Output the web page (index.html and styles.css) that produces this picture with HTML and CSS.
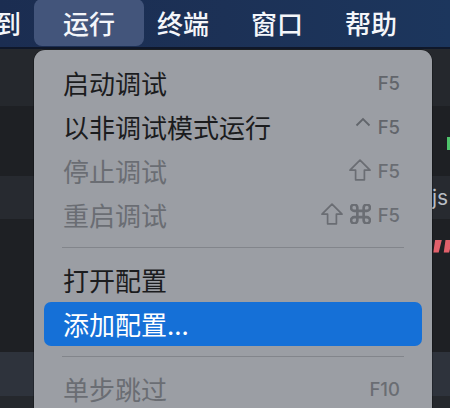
FILE: index.html
```html
<!DOCTYPE html>
<html lang="zh">
<head>
<meta charset="utf-8">
<link rel="stylesheet" href="styles.css">
</head>
<body>
<div class="screen">
  <nav class="menubar">
    <span class="mb-item first">转到</span>
    <span class="mb-item active">运行</span>
    <span class="mb-item">终端</span>
    <span class="mb-item">窗口</span>
    <span class="mb-item">帮助</span>
  </nav>
  <div class="workspace">
    <div class="stripe s1"></div>
    <div class="stripe s2"><span class="green-mark"></span></div>
    <div class="stripe s3"><span class="edge-text">js</span></div>
    <div class="stripe s4"><span class="edge-quote">""</span></div>
    <div class="stripe s5"></div>
    <div class="stripe s6"></div>

    <div class="dropdown">
      <div class="row"><span class="label">启动调试</span><span class="keys">F5</span></div>
      <div class="row"><span class="label">以非调试模式运行</span><span class="keys">
        <svg class="k-ctrl" width="16" height="10" viewBox="0 0 16 10"><path d="M1.5 8.5 L8 2 L14.5 8.5" fill="none" stroke="currentColor" stroke-width="1.8"/></svg>F5</span></div>
      <div class="row disabled"><span class="label">停止调试</span><span class="keys">
        <svg class="k-shift" width="22" height="22" viewBox="0 0 22 22"><path d="M11 1.2 L21 11.2 H15.4 V20.8 H6.6 V11.2 H1 Z" fill="none" stroke="currentColor" stroke-width="1.7" stroke-linejoin="round"/></svg>F5</span></div>
      <div class="row disabled"><span class="label">重启调试</span><span class="keys">
        <svg class="k-shift" width="22" height="22" viewBox="0 0 22 22"><path d="M11 1.2 L21 11.2 H15.4 V20.8 H6.6 V11.2 H1 Z" fill="none" stroke="currentColor" stroke-width="1.7" stroke-linejoin="round"/></svg>
        <svg class="k-cmd" width="21" height="20" viewBox="2 2.5 20 19"><path d="M15 6v12a3 3 0 1 0 3-3H6a3 3 0 1 0 3 3V6a3 3 0 1 0-3 3h12a3 3 0 1 0-3-3" fill="none" stroke="currentColor" stroke-width="2.5"/></svg>F5</span></div>
      <div class="sep"></div>
      <div class="row"><span class="label">打开配置</span></div>
      <div class="row selected"><span class="label">添加配置...</span></div>
      <div class="sep"></div>
      <div class="row disabled"><span class="label">单步跳过</span><span class="keys">F10</span></div>
    </div>
  </div>
</div>
</body>
</html>
```

FILE: styles.css
```css
* { box-sizing: border-box; }
html, body { margin: 0; padding: 0; }
body {
  width: 450px;
  height: 408px;
  overflow: hidden;
  background: #1e2024;
  font-family: "Noto Sans CJK SC", "Noto Sans", sans-serif;
}
.screen {
  width: 450px;
  height: 408px;
  overflow: hidden;
  display: flex;
  flex-direction: column;
}
.menubar {
  height: 49px;
  flex: none;
  display: flex;
  align-items: flex-start;
  background: linear-gradient(90deg, #1b2d51 0%, #1c3156 50%, #1c365d 100%);
  border-bottom: 2px solid #0f1729;
  white-space: nowrap;
}
.mb-item {
  height: 46px;
  line-height: 46px;
  padding: 0 21px;
  color: #f4f6fa;
  font-size: 26px;
  font-weight: 500;
  flex: none;
}
.mb-item.first { margin-left: -52px; }
.mb-item.active {
  margin: -1px -8px 0;
  padding: 1px 29px 0;
  height: 47px;
  background: #43557b;
  border-radius: 8px;
}
.workspace {
  flex: 1;
  display: flex;
  flex-direction: column;
  position: relative;
}
.stripe {
  flex: none;
  position: relative;
  overflow: hidden;
  white-space: nowrap;
}
.s1 { height: 57px; background: #25282d; }
.s2 { height: 70px; background: #1e2024; }
.s3 { height: 43px; background: #272a30; }
.s4 { height: 133px; background: #1e2024; }
.s5 { height: 44px; background: #2e333c; }
.s6 { height: 20px; background: #25282d; }
.green-mark {
  display: block;
  margin: 31px 0 0 447px;
  width: 4px;
  height: 13px;
  background: #4fc46c;
}
.edge-text {
  display: block;
  margin: 8px 0 0 432px;
  font-family: "Inter", "Noto Sans", sans-serif;
  font-size: 21px;
  color: #b9bdc5;
  line-height: 28px;
}
.edge-quote {
  display: block;
  margin: 15px 0 0 428px;
  font-family: "Liberation Sans", sans-serif;
  font-style: italic;
  font-weight: bold;
  font-size: 50px;
  line-height: 48px;
  color: #e0606b;
}
.dropdown {
  position: absolute;
  left: 34px;
  top: 1px;
  width: 398px;
  height: 420px;
  background: #9b9ea4;
  border-radius: 11px;
  padding: 11px 10px;
  box-shadow: 0 0 0 0.5px rgba(0,0,0,0.5);
}
.row {
  height: 44px;
  display: flex;
  align-items: center;
  justify-content: space-between;
  padding: 0 22px 0 19px;
  border-radius: 7px;
  color: #1b1c1e;
}
.label {
  font-size: 26px;
  line-height: 44px;
  white-space: nowrap;
}
.keys {
  display: flex;
  align-items: center;
  gap: 7px;
  font-family: "Inter", "Noto Sans", sans-serif;
  font-size: 18.5px;
  font-weight: 500;
  color: #62656b;
}
.row.disabled { color: #6a6d73; }
.row.disabled .keys { color: #6a6d73; }
.k-ctrl { margin-top: -10px; }
.k-shift { margin-top: -2px; }
.k-cmd { margin-left: 0; margin-top: -2px; }
.row.selected {
  background: #1570d7;
  color: #ffffff;
}
.sep {
  height: 1px;
  margin: 10px 18px;
  background: #82858b;
}
```
